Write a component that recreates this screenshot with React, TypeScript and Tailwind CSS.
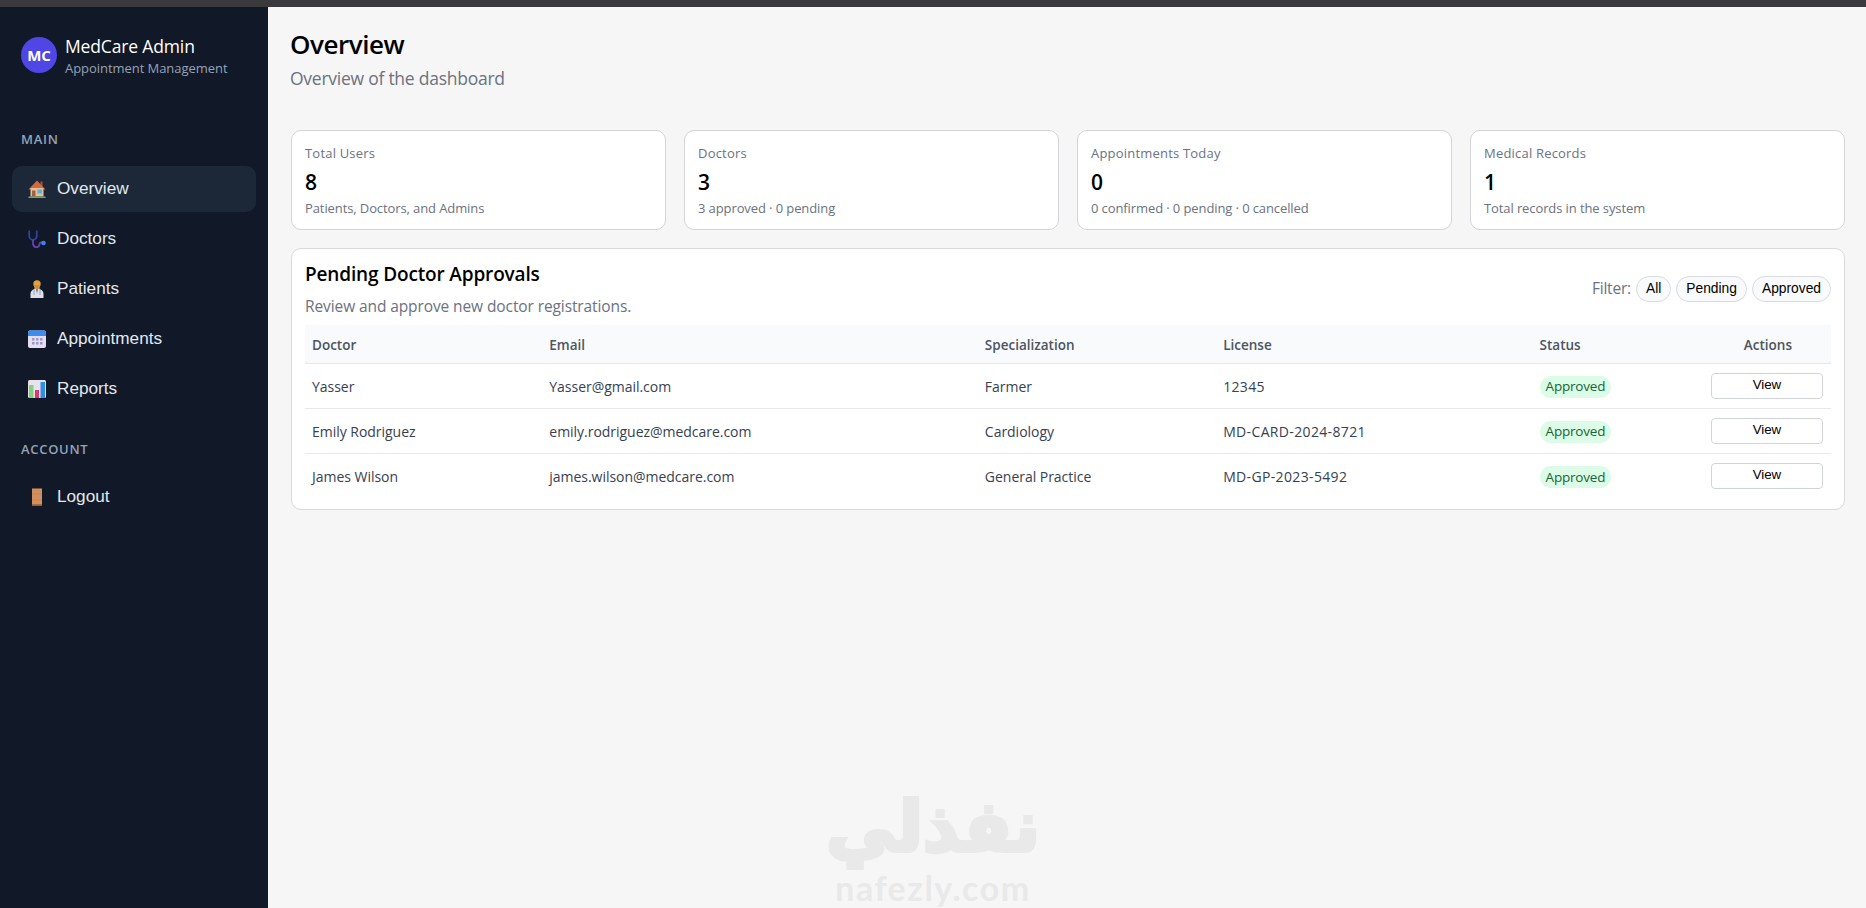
const ui = "font-['Open_Sans','Noto_Sans',sans-serif]";
const arial = "font-['Liberation_Sans',Arial,sans-serif]";

function HouseIcon() {
  return (
    <svg className="h-[18px] w-[18px]" viewBox="0 0 18 18" aria-hidden>
      <rect x="12.500" y="1.500" width="2" height="5" fill="#a8553a" />
      <path d="M9 0.500 0.500 9.500h17z" fill="#d2693f" />
      <rect x="2.500" y="8" width="13" height="8.500" fill="#e8bd97" />
      <rect x="4" y="10.500" width="3.500" height="6" fill="#a3603f" />
      <rect x="9.500" y="9.500" width="4.500" height="4" fill="#45bcdf" />
      <rect x="0.500" y="16.500" width="17" height="1.500" fill="#68a86c" />
    </svg>
  );
}

function StethoscopeIcon() {
  return (
    <svg className="h-[18px] w-[18px]" viewBox="0 0 18 18" fill="none" aria-hidden>
      <path d="M1.200 0.500v5.500a3.800 3.800 0 0 0 7.600 0V0.500" stroke="#35409f" strokeWidth="1.800" />
      <path d="M5 9.800v3.500c0 5 6 5 6.500 1 .3-2 1.500-2 2.500-1.500" stroke="#6a3db8" strokeWidth="1.800" />
      <circle cx="15.500" cy="13" r="2.300" fill="#3b82f6" />
    </svg>
  );
}

function DoctorIcon() {
  return (
    <svg className="h-[18px] w-[18px]" viewBox="0 0 18 18" aria-hidden>
      <circle cx="9" cy="4" r="3.700" fill="#e0a23c" />
      <path d="M6.300 5h5.400v4.500H6.300z" fill="#cf8f38" />
      <path d="M2.500 18v-4c0-3 2.500-5.200 6.500-5.200s6.500 2.200 6.500 5.200v4z" fill="#dde2ea" />
      <path d="M7.800 8.800h2.400L9 13.500z" fill="#5b7fa6" />
      <path d="M6 10v5M12 10v5" stroke="#8a97ab" strokeWidth="0.800" />
    </svg>
  );
}

function CalendarIcon() {
  return (
    <svg className="h-[18px] w-[18px]" viewBox="0 0 18 18" aria-hidden>
      <rect y="0.500" width="18" height="17.500" rx="2" fill="#e3def2" />
      <path d="M0 6V2.500a2 2 0 0 1 2-2h14a2 2 0 0 1 2 2V6z" fill="#3b8cf0" />
      <g fill="#a097c2">
        <rect x="4" y="8" width="2.500" height="2.500" /><rect x="8" y="8" width="2.500" height="2.500" /><rect x="12" y="8" width="2.500" height="2.500" />
        <rect x="4" y="12" width="2.500" height="2.500" /><rect x="8" y="12" width="2.500" height="2.500" /><rect x="12" y="12" width="2.500" height="2.500" />
      </g>
    </svg>
  );
}

function ChartIcon() {
  return (
    <svg className="h-[18px] w-[18px]" viewBox="0 0 18 18" aria-hidden>
      <rect width="18" height="18" rx="1.500" fill="#e6e4ea" />
      <rect x="1" y="5" width="4.500" height="13" fill="#86d07f" />
      <rect x="7" y="10" width="4" height="8" fill="#e0356b" />
      <rect x="12.500" y="2" width="4.500" height="16" fill="#2f8fe8" />
    </svg>
  );
}

function DoorIcon() {
  return (
    <svg className="h-[18px] w-[18px]" viewBox="0 0 18 18" aria-hidden>
      <rect x="4" y="0.500" width="10" height="17" fill="#d3905f" />
      <path d="M4 6h10M4 12h10" stroke="#bd7a4c" strokeWidth="0.500" />
      <rect x="4" y="16" width="10" height="1.500" fill="#a96a3f" />
    </svg>
  );
}

const mainNav = [
  { label: "Overview", icon: <HouseIcon />, active: true },
  { label: "Doctors", icon: <StethoscopeIcon /> },
  { label: "Patients", icon: <DoctorIcon /> },
  { label: "Appointments", icon: <CalendarIcon /> },
  { label: "Reports", icon: <ChartIcon /> },
];

const stats = [
  { label: "Total Users", value: "8", hint: "Patients, Doctors, and Admins" },
  { label: "Doctors", value: "3", hint: "3 approved · 0 pending" },
  { label: "Appointments Today", value: "0", hint: "0 confirmed · 0 pending · 0 cancelled" },
  { label: "Medical Records", value: "1", hint: "Total records in the system" },
];

const doctors = [
  { name: "Yasser", email: "Yasser@gmail.com", spec: "Farmer", license: "12345" },
  { name: "Emily Rodriguez", email: "emily.rodriguez@medcare.com", spec: "Cardiology", license: "MD-CARD-2024-8721" },
  { name: "James Wilson", email: "james.wilson@medcare.com", spec: "General Practice", license: "MD-GP-2023-5492" },
];

function NavItem({ label, icon, active }: { label: string; icon: React.ReactNode; active?: boolean }) {
  return (
    <div className={`mx-3 flex h-[46px] items-center gap-[11px] rounded-[10px] px-4 ${active ? "bg-[#1c2837]" : ""}`}>
      <span className="flex w-[18px] justify-center">{icon}</span>
      <span className={`${arial} text-[17.200px] text-[#e2e8f0]`}>{label}</span>
    </div>
  );
}

function Sidebar() {
  return (
    <aside className="flex w-[268px] shrink-0 flex-col bg-[#111827]">
      <div className="flex items-center gap-2 pl-[21px] pt-[28px]">
        <div className="mb-[2px] flex h-9 w-9 items-center justify-center rounded-full bg-[#4f46e5] text-[15px] font-bold text-white">MC</div>
        <div>
          <div className="text-[17.500px] leading-[22px] tracking-[-0.15px] text-white">MedCare Admin</div>
          <div className="mt-[2px] text-[13px] leading-[18px] tracking-[-0.05px] text-[#94a3b8]">Appointment Management</div>
        </div>
      </div>
      <div className="pl-[21px] pt-[53px] text-[13px] font-semibold leading-[18px] tracking-[0.7px] text-[#94a3b8]">MAIN</div>
      <nav className="flex flex-col gap-1 pt-[18px]">
        {mainNav.map((item) => (
          <NavItem key={item.label} {...item} />
        ))}
      </nav>
      <div className="pl-[21px] pt-[28px] text-[13px] font-semibold leading-[18px] tracking-[0.7px] text-[#94a3b8]">ACCOUNT</div>
      <div className="pt-4">
        <NavItem label="Logout" icon={<DoorIcon />} />
      </div>
    </aside>
  );
}

function StatCard({ label, value, hint }: { label: string; value: string; hint: string }) {
  return (
    <div className="h-[100px] rounded-[10px] border border-[#d4d5d8] bg-white px-[13px] pt-[13px]">
      <div className="text-[13px] leading-[18px] tracking-[0.2px] text-[#6b7280]">{label}</div>
      <div className="mt-[6px] text-[21px] font-semibold leading-[28px] text-black">{value}</div>
      <div className="mt-[3px] text-[13px] leading-[18px] tracking-[-0.1px] text-[#6b7280]">{hint}</div>
    </div>
  );
}

function FilterPill({ label }: { label: string }) {
  return (
    <button className={`${arial} h-[26px] rounded-full border border-[#d8dbe0] bg-[#f9fafb] px-[9px] text-[13.800px] leading-none text-black`}>
      {label}
    </button>
  );
}

function DoctorsPanel() {
  return (
    <section className="rounded-[10px] border border-[#d9dadc] bg-white px-[13px] pb-[11px] pt-[12px]">
      <div className="flex items-center justify-between">
        <div>
          <h2 className="text-[19px] font-semibold leading-[26px] tracking-[-0.15px] text-black">Pending Doctor Approvals</h2>
          <p className="mt-[9px] text-[15.500px] leading-[20px] tracking-[-0.1px] text-[#6b7280]">Review and approve new doctor registrations.</p>
        </div>
        <div className="flex items-center gap-[5px]">
          <span className="text-[15.500px] tracking-[-0.2px] text-[#6b7280]">Filter:</span>
          <FilterPill label="All" />
          <FilterPill label="Pending" />
          <FilterPill label="Approved" />
        </div>
      </div>
      <table className="mt-[9px] w-full table-fixed border-collapse text-left">
        <colgroup>
          <col className="w-[237px]" />
          <col className="w-[435px]" />
          <col className="w-[238px]" />
          <col className="w-[316px]" />
          <col className="w-[172px]" />
          <col className="w-[126px]" />
        </colgroup>
        <thead>
          <tr className="h-[38px] border-b border-[#e5e7eb] bg-[#f9fafb] text-[13.500px] font-semibold text-[#4b5563]">
            <th className="px-[7px] pt-[2px] font-semibold">Doctor</th>
            <th className="px-[7px] pt-[2px] font-semibold">Email</th>
            <th className="px-[7px] pt-[2px] font-semibold">Specialization</th>
            <th className="px-[7px] pt-[2px] font-semibold">License</th>
            <th className="px-[7px] pt-[2px] font-semibold">Status</th>
            <th className="px-[7px] pt-[2px] text-center font-semibold">Actions</th>
          </tr>
        </thead>
        <tbody>
          {doctors.map((d, i) => (
            <tr key={d.name} className={`h-[45px] text-[14px] tracking-[-0.03px] text-[#374151] ${i < doctors.length - 1 ? "border-b border-[#e5e7eb]" : ""}`}>
              <td className="px-[7px] pt-[2px]">{d.name}</td>
              <td className="px-[7px] pt-[2px]">{d.email}</td>
              <td className="px-[7px] pt-[2px]">{d.spec}</td>
              <td className="px-[7px] pt-[2px] tracking-[0.35px]">{d.license}</td>
              <td className="px-[7px] pt-[2px]">
                <span className="inline-flex h-[22px] items-center rounded-full bg-[#dcfce7] px-[6px] text-[13.500px] tracking-[-0.2px] text-[#166534]">Approved</span>
              </td>
              <td className="pl-[6px] pr-2">
                <button className={`${arial} h-[26px] w-full rounded-[4px] border border-[#d1d5db] bg-white pb-[2px] text-[13.300px] text-black`}>View</button>
              </td>
            </tr>
          ))}
        </tbody>
      </table>
    </section>
  );
}

export default function App() {
  return (
    <div className={`${ui} relative flex h-[908px] flex-col overflow-hidden bg-[#f6f6f6]`}>
      <div className="h-[7px] shrink-0 bg-[#3a3a3c]" />
      <div className="flex min-h-0 flex-1">
        <Sidebar />
        <main className="flex-1 pl-[22px] pr-[21px] pt-[19px]">
          <h1 className="text-[26px] font-semibold leading-[36px] tracking-[-0.45px] text-black">Overview</h1>
          <p className="mt-[4px] text-[17.500px] leading-[24px] tracking-[-0.25px] text-[#6b7280]">Overview of the dashboard</p>
          <div className="ml-px mt-[40px] grid grid-cols-4 gap-[18px]">
            {stats.map((s) => (
              <StatCard key={s.label} {...s} />
            ))}
          </div>
          <div className="ml-px mt-[18px]">
            <DoctorsPanel />
          </div>
        </main>
      </div>
      {/* watermark sits over the page */}
      <div className="pointer-events-none absolute left-[827px] top-[785px] flex w-[212px] flex-col items-center text-[#e9e9ea]">
        <div dir="rtl" lang="ar" className="font-['DejaVu_Sans',sans-serif] text-[70px] font-bold leading-[84px] [-webkit-text-stroke:4px_#e9e9ea]">نفذلي</div>
        <div className="font-['Lato',sans-serif] text-[34px] font-bold leading-[38px] tracking-[1.500px]">nafezly.com</div>
      </div>
    </div>
  );
}
